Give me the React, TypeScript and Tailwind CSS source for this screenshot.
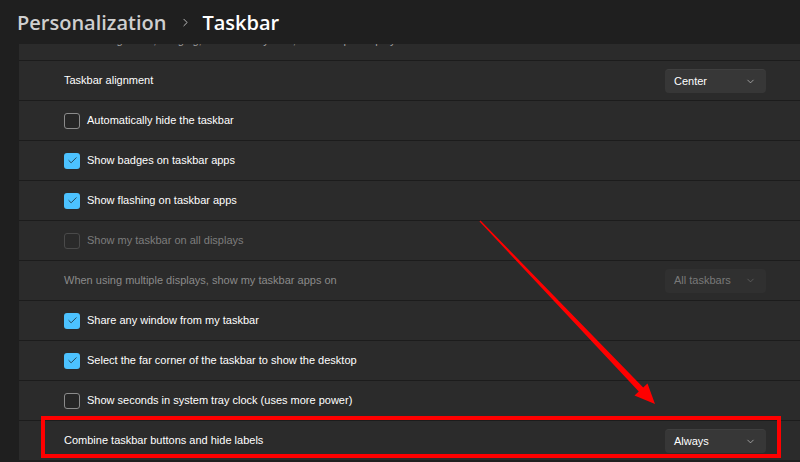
import { Check, ChevronDown, ChevronRight } from "lucide-react";

type Row =
  | { kind: "label"; text: string; dropdown?: string; disabled?: boolean }
  | { kind: "check"; text: string; checked: boolean; disabled?: boolean };

const rows: Row[] = [
  { kind: "label", text: "Taskbar alignment", dropdown: "Center" },
  { kind: "check", text: "Automatically hide the taskbar", checked: false },
  { kind: "check", text: "Show badges on taskbar apps", checked: true },
  { kind: "check", text: "Show flashing on taskbar apps", checked: true },
  { kind: "check", text: "Show my taskbar on all displays", checked: false, disabled: true },
  {
    kind: "label",
    text: "When using multiple displays, show my taskbar apps on",
    dropdown: "All taskbars",
    disabled: true,
  },
  { kind: "check", text: "Share any window from my taskbar", checked: true },
  { kind: "check", text: "Select the far corner of the taskbar to show the desktop", checked: true },
  { kind: "check", text: "Show seconds in system tray clock (uses more power)", checked: false },
  { kind: "label", text: "Combine taskbar buttons and hide labels", dropdown: "Always" },
];

const Dropdown = ({ value, disabled }: { value: string; disabled?: boolean }) => (
  <div
    className={
      disabled
        ? "flex h-[24px] w-[101px] items-center justify-between rounded-[4px] bg-[#303030] pl-[9px] pr-[10px] text-[#797979]"
        : "flex h-[24px] w-[101px] items-center justify-between rounded-[4px] border-t border-[#3f3f3f] bg-[#373737] pl-[9px] pr-[10px] text-white"
    }
  >
    <span>{value}</span>
    <ChevronDown size={11} strokeWidth={1.5} className={disabled ? "text-[#6a6a6a]" : "text-[#c8c8c8]"} />
  </div>
);

const Checkbox = ({ checked, disabled }: { checked: boolean; disabled?: boolean }) =>
  checked ? (
    <div className="flex h-[16px] w-[16px] items-center justify-center rounded-[3px] bg-[#4cc2ff]">
      <Check size={11} strokeWidth={1.6} className="text-[#1a1a1a]" />
    </div>
  ) : (
    <div
      className={
        disabled
          ? "h-[16px] w-[16px] rounded-[3px] border border-[#4a4a4a] bg-[#2a2a2a]"
          : "h-[16px] w-[16px] rounded-[3px] border border-[#8b8b8b] bg-[#262626]"
      }
    />
  );

export default function App() {
  return (
    <div
      className="relative h-[462px] w-[800px] overflow-hidden bg-[#1f1f1f] text-[11px]"
      style={{ fontFamily: '"Liberation Sans", Arial, sans-serif' }}
    >
      <div
        className="flex h-[44px] items-center pl-[17px] pt-[1px] text-[20px] font-semibold"
        style={{ fontFamily: '"Open Sans", sans-serif' }}
      >
        <span className="text-[#cfcfcf]">Personalization</span>
        <ChevronRight size={13} strokeWidth={1.6} className="ml-[13px] mr-[10px] text-[#cfcfcf]" />
        <span className="text-white">Taskbar</span>
      </div>

      <div className="ml-[19px] flex flex-col gap-px bg-[#1c1c1c]">
        <div className="h-[16px] overflow-hidden bg-[#2b2b2b] pl-[45px]">
          <div className="-mt-[12px] text-[#a0a0a0]">
            Taskbar alignment, badging, automatically hide, and multiple displays
          </div>
        </div>
        {rows.map((row) => (
          <div
            key={row.text}
            className="flex h-[39px] items-center justify-between bg-[#2b2b2b] pl-[45px] pr-[34px]"
          >
            {row.kind === "check" ? (
              <div className="flex items-center gap-[7px]">
                <Checkbox checked={row.checked} disabled={row.disabled} />
                <span className={row.disabled ? "text-[#7d7d7d]" : "text-white"}>{row.text}</span>
              </div>
            ) : (
              <span className={row.disabled ? "text-[#8a8a8a]" : "text-white"}>{row.text}</span>
            )}
            {row.kind === "label" && row.dropdown && (
              <Dropdown value={row.dropdown} disabled={row.disabled} />
            )}
          </div>
        ))}
      </div>

      {/* red annotation */}
      <div className="pointer-events-none absolute left-[41px] top-[416px] h-[42px] w-[740px] border-[4px] border-[#ff0000]" />
      <svg className="pointer-events-none absolute left-0 top-0" width="800" height="462">
        <polygon
          points="480.5,220.5 643.2,387.4 647.5,383.5 655,404 634.5,395.5 638.8,391.6 479.5,221.5"
          fill="#ff0000"
        />
      </svg>
    </div>
  );
}
